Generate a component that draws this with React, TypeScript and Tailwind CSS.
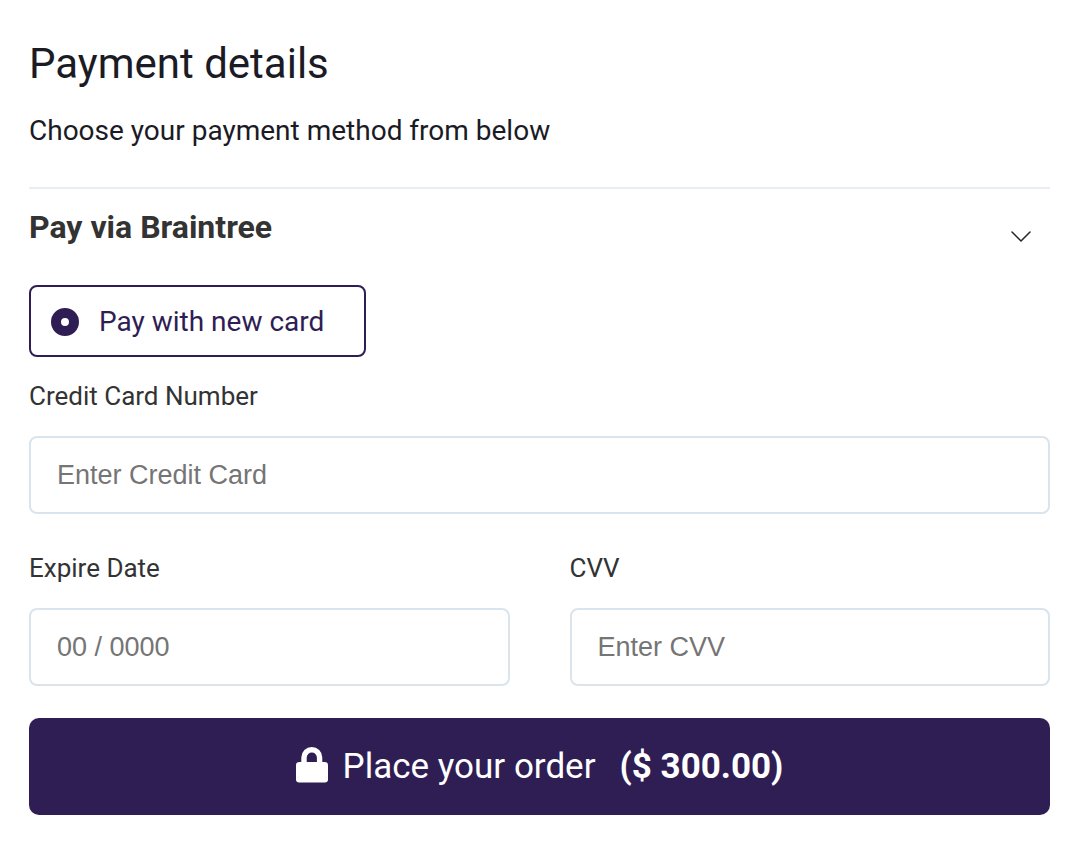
import React from "react";

type FieldProps = {
  id: string;
  label: string;
  placeholder: string;
};

function Field({ id, label, placeholder }: FieldProps) {
  return (
    <div className="flex min-w-0 flex-1 flex-col gap-6">
      <label htmlFor={id} className="text-[26px] leading-8 text-[#333333]">
        {label}
      </label>
      <input
        id={id}
        type="text"
        placeholder={placeholder}
        className="h-[78px] w-full rounded-lg border-2 border-[#dae4ed] bg-white px-[26px] font-['Liberation_Sans',Arial,sans-serif] text-[27px] text-[#333333] outline-none placeholder:text-[#757575]"
      />
    </div>
  );
}

export default function App() {
  return (
    <main className="min-h-screen bg-white pt-10 pr-[34px] pb-12 pl-[29px] font-['Roboto',sans-serif]">
      <header className="border-b-2 border-[#e9eef5] pb-[38px]">
        <h1 className="text-[42px] leading-12 text-[#1b1b25]">Payment details</h1>
        <p className="mt-[25px] text-[28px] leading-9 text-[#1b1b25]">Choose your payment method from below</p>
      </header>

      <section>
        <div className="flex items-center justify-between pt-[14px] pr-[19px]">
          <h2 className="text-[32px] leading-12 font-bold text-[#333333]">Pay via Braintree</h2>
          <button type="button" aria-label="Toggle Braintree" className="pt-5">
            <svg width="20" height="12" viewBox="0 0 20 12" fill="none" stroke="#212529" strokeWidth="1.5" strokeLinecap="round" strokeLinejoin="round">
              <path d="M1 1l9 9 9-9" />
            </svg>
          </button>
        </div>

        <label className="mt-[34px] flex h-[72px] w-fit items-center gap-5 rounded-lg border-2 border-[#2f1e54] pt-0.5 pr-10 pl-5 text-[28px] text-[#2f1e54]">
          <input
            type="radio"
            name="card"
            defaultChecked
            className="size-7 appearance-none rounded-full border-[10px] border-[#2f1e54] bg-white"
          />
          Pay with new card
        </label>

        <form className="mt-[23px]">
          <Field id="number" label="Credit Card Number" placeholder="Enter Credit Card" />
          <div className="mt-[38px] flex gap-[60px]">
            <Field id="expiry" label="Expire Date" placeholder="00 / 0000" />
            <Field id="cvv" label="CVV" placeholder="Enter CVV" />
          </div>
          <button
            type="button"
            className="mt-8 flex h-[97px] w-full items-center justify-center rounded-[10px] bg-[#2f1e54] pt-0.5 text-[35px] text-white"
          >
            <svg width="32" height="42" viewBox="0 0 32 42" fill="none" aria-hidden="true">
              <path d="M8 17V10.5a7.8 7.8 0 0 1 15.6 0V17" stroke="white" strokeWidth="5.4" />
              <rect y="15" width="32" height="20.5" rx="3.2" fill="white" />
            </svg>
            <span className="ml-[15px]">Place your order</span>
            <strong className="ml-6 font-bold">($ 300.00)</strong>
          </button>
        </form>
      </section>
    </main>
  );
}
